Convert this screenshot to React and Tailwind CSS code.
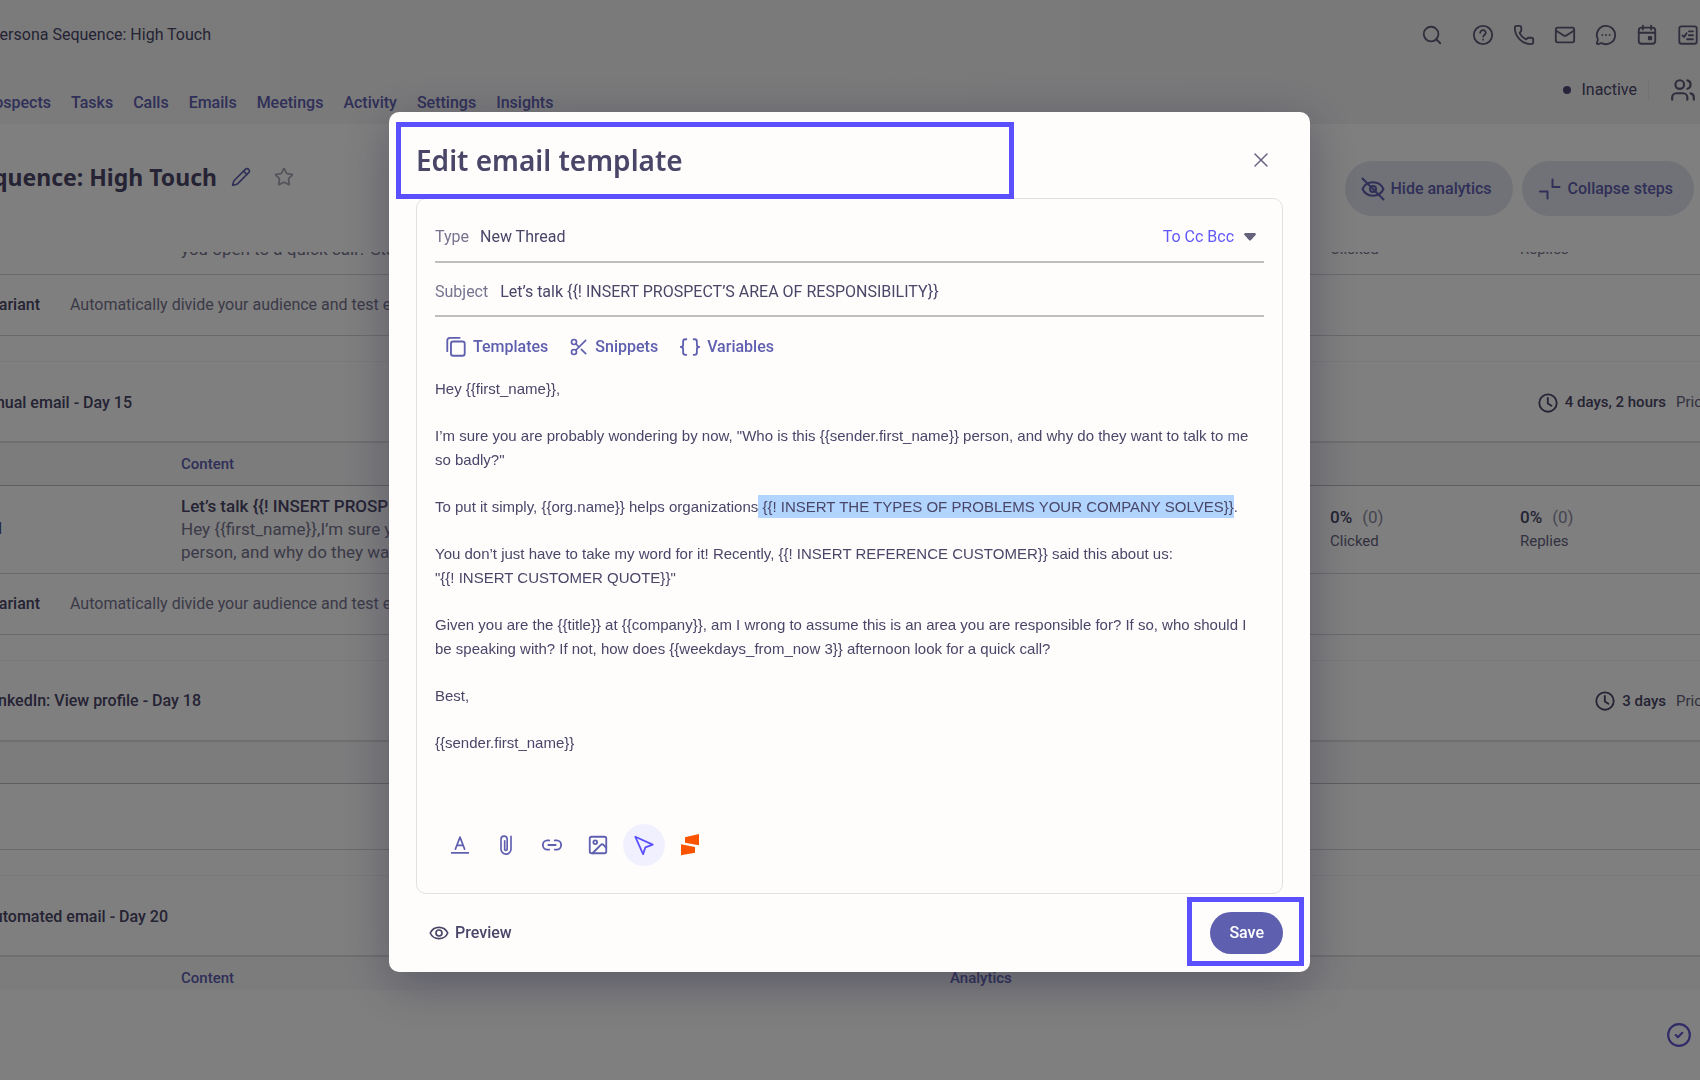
import React from 'react';
import { CircleCheck, Image, Link2, Mail, MessageCircleMore, Pencil, Phone, Scissors, Search, Star, Users, X } from 'lucide-react';

const tabs = ['Tasks', 'Calls', 'Emails', 'Meetings', 'Activity', 'Settings', 'Insights'];

function Svg({ size = 24, width = 2, className, children }) {
  return (
    <svg width={size} height={size} viewBox="0 0 24 24" fill="none" stroke="currentColor" strokeWidth={width} strokeLinecap="round" strokeLinejoin="round" className={className} aria-hidden="true">
      {children}
    </svg>
  );
}

const HelpIcon = () => (
  <Svg size={22}><circle cx="12" cy="12" r="10" /><path d="M9 9.600a3 3 0 0 1 6 .2c0 2-2.800 2.200-2.800 4" /><path d="M12.100 17.100h.01" /></Svg>
);
const CalendarIcon = () => (
  <Svg size={22}><rect x="3" y="4" width="18" height="17.500" rx="3" /><path d="M3 9.500h18M7.500 1.800V6M16.500 1.800V6" /><rect x="14" y="14" width="2.600" height="2.600" fill="currentColor" /></Svg>
);
const ChecklistIcon = () => (
  <Svg size={22}><rect x="2.500" y="2.500" width="19" height="19" rx="2.500" /><path d="m6 12.500 1.800 1.800L10.500 10M13 8h4.500M13 12.300h4.500M11 16.600h6.500" /></Svg>
);
const ClockIcon = () => (
  <Svg size={22}><circle cx="12" cy="12" r="9.500" /><path d="M11.800 6.500v6l4 2.500" /></Svg>
);
const EyeIcon = () => (
  <Svg size={20}><path d="M1.500 12c2-4.500 6-6.800 10.500-6.800S20.500 7.500 22.500 12c-2 4.500-6 6.800-10.500 6.800S3.500 16.500 1.500 12Z" /><circle cx="12" cy="12" r="3.600" /></Svg>
);
const HideIcon = () => (
  <Svg size={24}><path d="M1.500 12C3.500 7.600 7.400 5.300 12 5.300S20.500 7.600 22.500 12c-2 4.400-5.900 6.700-10.500 6.700S3.500 16.400 1.500 12Z" /><circle cx="12" cy="12" r="3" /><path d="m1.500 1.500 21 21" /></Svg>
);
const CollapseIcon = () => (
  <Svg size={24}><path d="M14.500 2.500v7.500h7M2 14.500h7.500v7" /></Svg>
);
const TemplatesIcon = () => (
  <Svg size={22}><rect x="6.500" y="6" width="15" height="15.500" rx="2.500" /><path d="M2.500 16.500V5a3 3 0 0 1 3-3H16" /></Svg>
);
const BracesIcon = () => (
  <Svg size={22}><path d="M8 3.500H7a2.500 2.500 0 0 0-2.500 2.500v3.500C4.500 11 3.500 12 2 12c1.500 0 2.500 1 2.500 2.500V18A2.500 2.500 0 0 0 7 20.500h1M16 3.500h1A2.500 2.500 0 0 1 19.500 6v3.500c0 1.500 1 2.500 2.500 2.500-1.500 0-2.500 1-2.500 2.500V18a2.500 2.500 0 0 1-2.500 2.500h-1" /></Svg>
);
const TextStyleIcon = () => (
  <Svg size={20}><path d="M2 21.500h20M6.500 17 12 2.500 17.500 17M8.200 12.500h7.600" /></Svg>
);
const ClipIcon = () => (
  <Svg size={20}><path d="M6 7.500V17a6 6 0 0 0 12 0V1.500M6 7.500V5a3.700 3.700 0 0 1 7.400 0v12a1.500 1.500 0 0 1-3 0V7" /></Svg>
);
const CursorIcon = () => (
  <Svg size={22}><path d="m2.500 3 19 8.500-8 3-2.500 7.500Z" /></Svg>
);
const BrandIcon = () => (
  <svg width="18" height="22" viewBox="0 0 18 22" fill="#fa5400" aria-hidden="true">
    <path d="M4 3.300 18 0v11.300L4 8.700ZM0 10.300 14 13v5.700L0 21.300Z" />
  </svg>
);

function Variant() {
  return (
    <div className="flex h-[61px] items-center border-b border-[#d4d4da] whitespace-nowrap">
      <div className="flex w-10 justify-end font-medium">Add variant</div>
      <p className="pl-[30px] text-[#77748f]">Automatically divide your audience and test effectiveness</p>
    </div>
  );
}

function StepHeader({ title, end, wait }) {
  return (
    <div className="mt-[25px] flex h-[82px] items-center justify-between border-t border-b-2 border-t-[#f3f3f6] border-b-[#dedede] pt-0.5 font-medium whitespace-nowrap">
      <h2 className={`flex justify-end ${end}`}>{title}</h2>
      {wait && (
        <div className="flex items-center text-[15px]">
          <ClockIcon />
          <span className="pl-1.5">{wait}</span>
          <span className="ml-2.5 w-6 overflow-hidden font-normal text-[#66637f]">Priority</span>
        </div>
      )}
    </div>
  );
}

function StepTable({ head = [], children }) {
  return (
    <table className="w-full table-fixed text-left">
      <colgroup>
        <col className="w-[181px]" />
        <col />
        <col className="w-[380px]" />
        <col className="w-[190px]" />
        <col className="w-[180px]" />
      </colgroup>
      <thead>
        <tr className="h-[42px] border-b border-[#bcbcbe] bg-[#f9f9fb] text-[15px] text-[#5f5fb0]">
          <th></th>
          <th className="font-medium">{head[0]}</th>
          <th className="font-medium">{head[1]}</th>
          <th></th>
          <th></th>
        </tr>
      </thead>
      <tbody>{children}</tbody>
    </table>
  );
}

function Stat({ label }) {
  return (
    <td className="leading-6">
      <div className="text-[17px] font-medium">0%<span className="pl-2.5 font-normal text-[#8b89a2]">(0)</span></div>
      <div className="text-[15px] text-[#66637f]">{label}</div>
    </td>
  );
}

function Sequence() {
  return (
    <div className="flex h-screen flex-col overflow-hidden bg-white text-base text-[#4a4668]">
      <header className="h-[124px] shrink-0 bg-linear-to-r from-[#f6f6f6] to-[#f2f2f5] whitespace-nowrap">
        <div className="flex h-[70px] items-center justify-between">
          <div className="flex w-[211px] justify-end">Persona Sequence: High Touch</div>
          <div className="flex items-center gap-[19px] pr-px text-[#605d78]">
            <Search size={22} className="mr-2.5" />
            <HelpIcon />
            <Phone size={22} />
            <Mail size={22} />
            <MessageCircleMore size={22} />
            <CalendarIcon />
            <ChecklistIcon />
          </div>
        </div>
        <div className="flex items-start justify-between">
          <nav className="flex gap-5 pt-[21px] font-medium text-[#5f5fb0]">
            <a href="#prospects" className="flex w-[51px] justify-end">Prospects</a>
            {tabs.map(t => <a key={t} href={`#${t.toLowerCase()}`}>{t}</a>)}
          </nav>
          <div className="flex items-center pt-[7px] pr-1">
            <span className="size-2 rounded-full bg-[#4f4b78]" />
            <span className="pl-2.5">Inactive</span>
            <span className="mx-[11px] h-5 w-px bg-[#e4e4e8]" />
            <Users size={26} className="ml-2.5 text-[#605d78]" />
          </div>
        </div>
      </header>

      <div className="flex h-32 shrink-0 items-start justify-between pr-1.5 whitespace-nowrap">
        <div className="flex items-center pt-[37px]">
          <h1 className="flex w-[217px] justify-end font-['Noto_Sans'] text-[23px] leading-8 font-bold">Persona Sequence: High Touch</h1>
          <Pencil size={20} className="ml-3.5 text-[#5f5fb0]" />
          <Star size={20} className="ml-[23px] text-[#a5a4b2]" />
        </div>
        <div className="flex gap-[9px] pt-[37px] font-medium text-[#5f5fb0]">
          <button className="flex h-[55px] items-center gap-1.5 rounded-full bg-[#e3e4ee] pr-[21px] pl-4"><HideIcon />Hide analytics</button>
          <button className="flex h-[55px] items-center gap-1.5 rounded-full bg-[#e3e4ee] pr-[21px] pl-4"><CollapseIcon />Collapse steps</button>
        </div>
      </div>

      <main className="flex-1 overflow-hidden">
        <div className="flex h-[23px] items-end overflow-hidden border-b border-[#d4d4da] pb-[13px] leading-[23px] whitespace-nowrap text-[#77748f]">
          <div className="w-[181px] shrink-0" />
          <div className="flex-1 text-[17px]">you open to a quick call? Stay well</div>
          <div className="w-[190px] text-[15px]">Clicked</div>
          <div className="w-[180px] text-[15px]">Replies</div>
        </div>
        <Variant />

        <StepHeader title="Manual email - Day 15" end="w-[132px]" wait="4 days, 2 hours" />
        <StepTable head={['Content']}>
          <tr className="h-[88px] border-b border-[#d4d4da]">
            <td><div className="flex w-0.5 justify-end">Thread</div></td>
            <td className="text-[17px] leading-[23px] whitespace-nowrap">
              <div className="font-medium">Let’s talk {'{{! INSERT PROSPECT’S AREA'}</div>
              <div className="text-[#77748f]">{'Hey {{first_name}},I’m sure you are'}<br />person, and why do they want</div>
            </td>
            <td></td>
            <Stat label="Clicked" />
            <Stat label="Replies" />
          </tr>
        </StepTable>
        <Variant />

        <StepHeader title="LinkedIn: View profile - Day 18" end="w-[201px]" wait="3 days" />
        <StepTable>
          <tr className="h-[66px] border-b border-[#d4d4da]"><td colSpan="5"></td></tr>
        </StepTable>

        <StepHeader title="Automated email - Day 20" end="w-[168px]" />
        <StepTable head={['Content', 'Analytics']} />
      </main>

      <footer className="flex h-[90px] shrink-0 items-center justify-end pr-2">
        <CircleCheck size={26} className="text-[#6256d0]" />
      </footer>
    </div>
  );
}

function EmailModal() {
  return (
    <div className="fixed inset-0 flex items-center justify-center bg-black/50 pt-1 pr-px">
      <div role="dialog" aria-labelledby="modal-title" className="relative w-[921px] rounded-[10px] bg-[#fefdfc] px-[27px] pb-[18px] text-base text-[#4a4668] shadow-[0_12px_48px_rgba(40,40,70,0.4)]">
        <div className="pointer-events-none absolute top-2.5 left-[7px] h-[77px] w-[618px] border-[5px] border-[#5b50ff]" />
        <div className="flex h-[86px] items-center justify-between pt-2.5 pr-2.5">
          <h2 id="modal-title" className="font-['Noto_Sans'] text-[28px] font-semibold">Edit email template</h2>
          <button aria-label="Close" className="text-[#65627e]"><X size={24} strokeWidth={1.500} /></button>
        </div>

        <div className="rounded-[10px] border border-[#e2e1e0] px-[18px] pb-[27px]">
          <div className="flex h-16 items-center border-b-2 border-[#bfbebc] pt-3.5">
            <span className="text-[#77748f]">Type</span>
            <span className="flex-1 pl-[11px]">New Thread</span>
            <button className="flex items-center gap-2.5 pr-2 text-[#6258fa]">
              To Cc Bcc
              <svg width="12" height="8" viewBox="0 0 12 8" fill="#65627e" aria-hidden="true"><path d="M.8 0h10.400L12 1.600 6.600 7.600H5.400L0 1.600Z" /></svg>
            </button>
          </div>
          <div className="flex h-[54px] items-center border-b-2 border-[#bfbebc] pt-1.5">
            <label htmlFor="subject" className="text-[#77748f]">Subject</label>
            <input id="subject" className="flex-1 pl-3 outline-none" defaultValue="Let’s talk {{! INSERT PROSPECT’S AREA OF RESPONSIBILITY}}" />
          </div>

          <div className="flex h-[60px] items-center gap-[21px] pl-2.5 font-medium text-[#5f5fb0]">
            <button className="flex items-center gap-1.5"><TemplatesIcon />Templates</button>
            <button className="flex items-center gap-1.5"><Scissors size={20} />Snippets</button>
            <button className="flex items-center gap-1.5"><BracesIcon />Variables</button>
          </div>

          <div className="flex flex-col gap-[23px] pb-[69px] font-['Liberation_Sans',sans-serif] text-[15px] leading-6">
            <p>{'Hey {{first_name}},'}</p>
            <p>{'I’m sure you are probably wondering by now, "Who is this {{sender.first_name}} person, and why do they want to talk to me so badly?"'}</p>
            <p>{'To put it simply, {{org.name}} helps organizations'}<mark className="bg-[#b2d5ff] py-[3px] text-inherit">{' {{! INSERT THE TYPES OF PROBLEMS YOUR COMPANY SOLVES}}'}</mark>.</p>
            <p>{'You don’t just have to take my word for it! Recently, {{! INSERT REFERENCE CUSTOMER}} said this about us:'}<br />{'"{{! INSERT CUSTOMER QUOTE}}"'}</p>
            <p>{'Given you are the {{title}} at {{company}}, am I wrong to assume this is an area you are responsible for? If so, who should I be speaking with? If not, how does {{weekdays_from_now 3}} afternoon look for a quick call?'}</p>
            <p>Best,</p>
            <p>{'{{sender.first_name}}'}</p>
          </div>

          <div className="flex gap-1 pl-1 text-[#5f5fb0]">
            <button aria-label="Text style" className="grid size-[42px] place-items-center"><TextStyleIcon /></button>
            <button aria-label="Attach file" className="grid size-[42px] place-items-center"><ClipIcon /></button>
            <button aria-label="Insert link" className="grid size-[42px] place-items-center"><Link2 size={22} /></button>
            <button aria-label="Insert image" className="grid size-[42px] place-items-center"><Image size={22} /></button>
            <button aria-label="Track clicks" className="grid size-[42px] place-items-center rounded-full bg-[#f1f0fe] text-[#5b50ff]"><CursorIcon /></button>
            <button aria-label="Integrations" className="grid size-[42px] place-items-center"><BrandIcon /></button>
          </div>
        </div>

        <div className="flex items-center justify-between pt-[18px] font-medium">
          <button className="flex items-center gap-1.5 pl-[13px]"><EyeIcon />Preview</button>
          <button className="h-[42px] rounded-full bg-[#5f5fb0] px-[19px] text-white">Save</button>
        </div>
        <div className="pointer-events-none absolute right-1.5 bottom-1.5 h-[69px] w-[117px] border-[5px] border-[#5b50ff]" />
      </div>
    </div>
  );
}

export default function App() {
  return (
    <div className="font-[Roboto,sans-serif]">
      <Sequence />
      <EmailModal />
    </div>
  );
}
